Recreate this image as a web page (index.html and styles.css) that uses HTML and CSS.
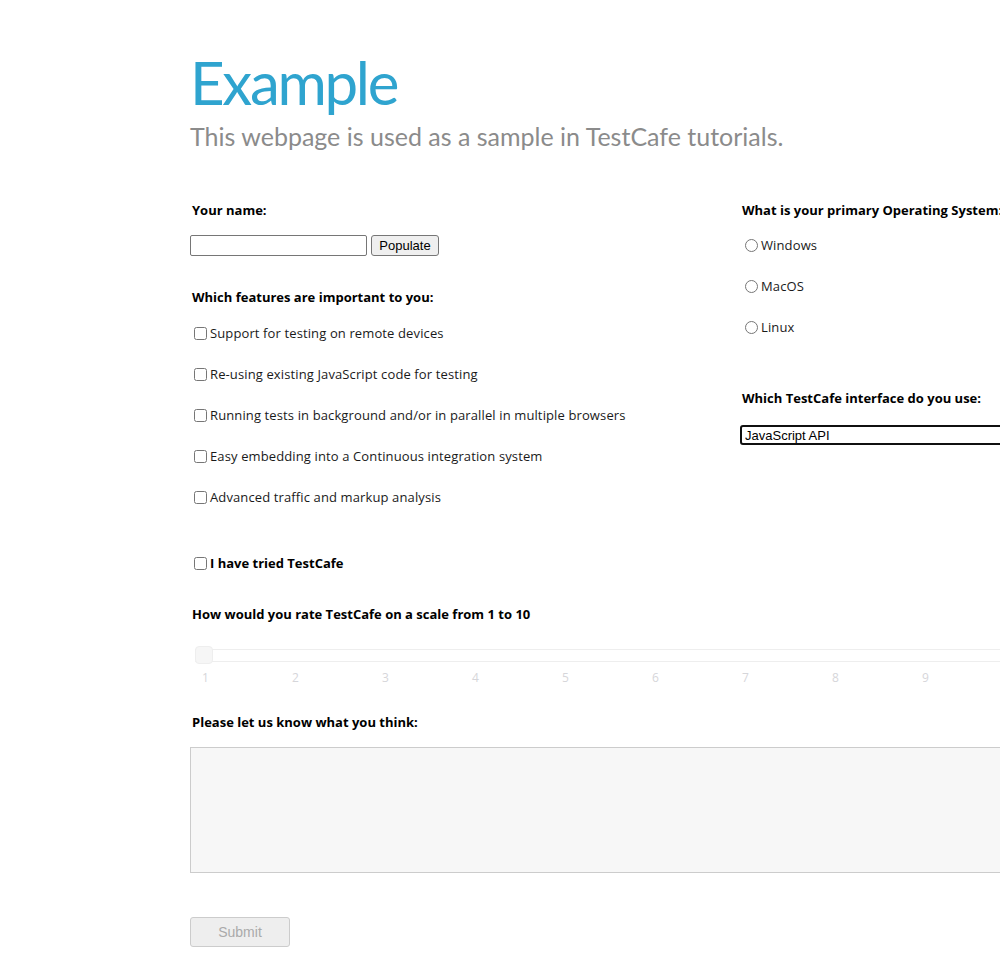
FILE: index.html
```html
<!DOCTYPE html>
<html lang="en">
<head>
<meta charset="utf-8">
<title>TestCafe Example Page</title>
<link rel="stylesheet" href="styles.css">
</head>
<body>
<div class="page">
  <header class="header">
    <h1 class="title">Example</h1>
    <p class="subtitle">This webpage is used as a sample in TestCafe tutorials.</p>
  </header>
  <form class="form">
    <div class="columns">
      <div class="col col-left">
        <div class="label-title">Your name:</div>
        <div class="name-row">
          <input class="name-input" type="text">
          <button class="btn" type="button">Populate</button>
        </div>
        <div class="label-title features-title">Which features are important to you:</div>
        <div class="options">
          <label class="option"><input type="checkbox">Support for testing on remote devices</label>
          <label class="option"><input type="checkbox">Re-using existing JavaScript code for testing</label>
          <label class="option"><input type="checkbox">Running tests in background and/or in parallel in multiple browsers</label>
          <label class="option"><input type="checkbox">Easy embedding into a Continuous integration system</label>
          <label class="option"><input type="checkbox">Advanced traffic and markup analysis</label>
        </div>
      </div>
      <div class="col col-right">
        <div class="label-title nowrap">What is your primary Operating System:</div>
        <div class="options radios">
          <label class="option"><input type="radio" name="os">Windows</label>
          <label class="option"><input type="radio" name="os">MacOS</label>
          <label class="option"><input type="radio" name="os">Linux</label>
        </div>
        <div class="label-title interface-title">Which TestCafe interface do you use:</div>
        <select class="select">
          <option>JavaScript API</option>
          <option>Command Line</option>
        </select>
      </div>
    </div>
    <label class="option tried"><input type="checkbox">I have tried TestCafe</label>
    <div class="label-title rate-title">How would you rate TestCafe on a scale from 1 to 10</div>
    <div class="slider">
      <div class="slider-track"><span class="slider-thumb"></span></div>
      <div class="slider-labels">
        <span>1</span><span>2</span><span>3</span><span>4</span><span>5</span><span>6</span><span>7</span><span>8</span><span>9</span><span>10</span>
      </div>
    </div>
    <div class="label-title comments-title">Please let us know what you think:</div>
    <textarea class="comments" disabled></textarea>
    <button class="submit" type="button" disabled>Submit</button>
  </form>
</div>
</body>
</html>
```
FILE: styles.css
```css
html, body {
  margin: 0;
  padding: 0;
  overflow-x: hidden;
  background: #fff;
}
body {
  font-family: "Open Sans", Lato, sans-serif;
  font-size: 13px;
  color: #000;
}
.page {
  padding-left: 190px;
  width: 950px;
  padding-bottom: 40px;
}
.header {
  padding-top: 52px;
}
.title {
  margin: 0;
  font-family: Lato, "Open Sans", sans-serif;
  font-size: 60px;
  line-height: 60px;
  font-weight: 400;
  letter-spacing: -2.3px;
  color: #2fa4cf;
}
.subtitle {
  margin: 8px 0 0 0;
  font-family: Lato, "Open Sans", sans-serif;
  font-size: 25px;
  line-height: 32px;
  color: #8b8b8b;
}
.form {
  margin-top: 48px;
}
.columns {
  display: flex;
}
.col-left {
  width: 550px;
  flex: none;
}
.col-right {
  flex: none;
  width: 400px;
}
.label-title {
  font-weight: 700;
  line-height: 20px;
  padding-left: 2px;
}
.nowrap {
  white-space: nowrap;
}
.name-row {
  display: flex;
  margin-top: 15px;
  height: 21px;
}
.name-input {
  box-sizing: border-box;
  width: 177px;
  height: 21px;
  margin: 0;
  border: 1px solid #767676;
  border-radius: 2px;
  padding: 1px 2px;
  font-family: "Liberation Sans", Arial, sans-serif;
  font-size: 13px;
}
.btn {
  box-sizing: border-box;
  margin: 0 0 0 4px;
  width: 68px;
  height: 21px;
  padding: 0;
  border: 1px solid #767676;
  border-radius: 3px;
  background: #efefef;
  font-family: "Liberation Sans", Arial, sans-serif;
  font-size: 13px;
  color: #000;
}
.features-title {
  margin-top: 31px;
}
.options {
  display: flex;
  flex-direction: column;
  gap: 21px;
  margin-top: 16px;
}
.option {
  display: flex;
  align-items: center;
  height: 20px;
  line-height: 20px;
  letter-spacing: 0.12px;
  color: #1a1a1a;
}
.option input {
  width: 13px;
  height: 13px;
  margin: 0 3px 0 4px;
}
.radios {
  margin-top: 15px;
}
.radios .option input {
  margin: 0 3px 0 5px;
}
.interface-title {
  margin-top: 51px;
}
.select {
  display: block;
  margin-top: 17px;
  box-sizing: border-box;
  width: 400px;
  height: 20px;
  border: 2px solid #101010;
  border-radius: 3px;
  padding: 0 0 0 3px;
  background: #fff;
  font-family: "Liberation Sans", Arial, sans-serif;
  font-size: 13px;
  color: #000;
  appearance: none;
  -webkit-appearance: none;
}
.tried {
  margin-top: 46px;
  font-weight: 700;
  letter-spacing: 0;
  color: #000;
}
.rate-title {
  margin-top: 31px;
}
.slider {
  margin-top: 25px;
  padding-left: 5px;
}
.slider-track {
  position: relative;
  box-sizing: border-box;
  width: 905px;
  height: 13px;
  border: 1px solid #eeeeee;
  border-left: none;
  border-right: none;
}
.slider-thumb {
  position: absolute;
  left: 0;
  top: -4px;
  box-sizing: border-box;
  width: 18px;
  height: 18px;
  border: 1px solid #eeeeee;
  border-radius: 4px;
  background: #f6f6f6;
}
.slider-labels {
  display: flex;
  margin-top: 8px;
  height: 16px;
  line-height: 16px;
  font-size: 12px;
  color: #d6d6da;
}
.slider-labels span {
  flex: none;
  width: 90px;
  padding-left: 7px;
  box-sizing: border-box;
}
.comments-title {
  margin-top: 26px;
}
.comments {
  display: block;
  box-sizing: border-box;
  margin-top: 15px;
  width: 950px;
  height: 126px;
  border: 1px solid #cccccc;
  background: #f7f7f7;
  resize: none;
}
.submit {
  display: block;
  box-sizing: border-box;
  margin-top: 44px;
  width: 100px;
  height: 30px;
  border: 1px solid #cccccc;
  border-radius: 3px;
  background: #eeeeee;
  color: #aaaaaa;
  font-family: "Liberation Sans", Arial, sans-serif;
  font-size: 14px;
}
```
